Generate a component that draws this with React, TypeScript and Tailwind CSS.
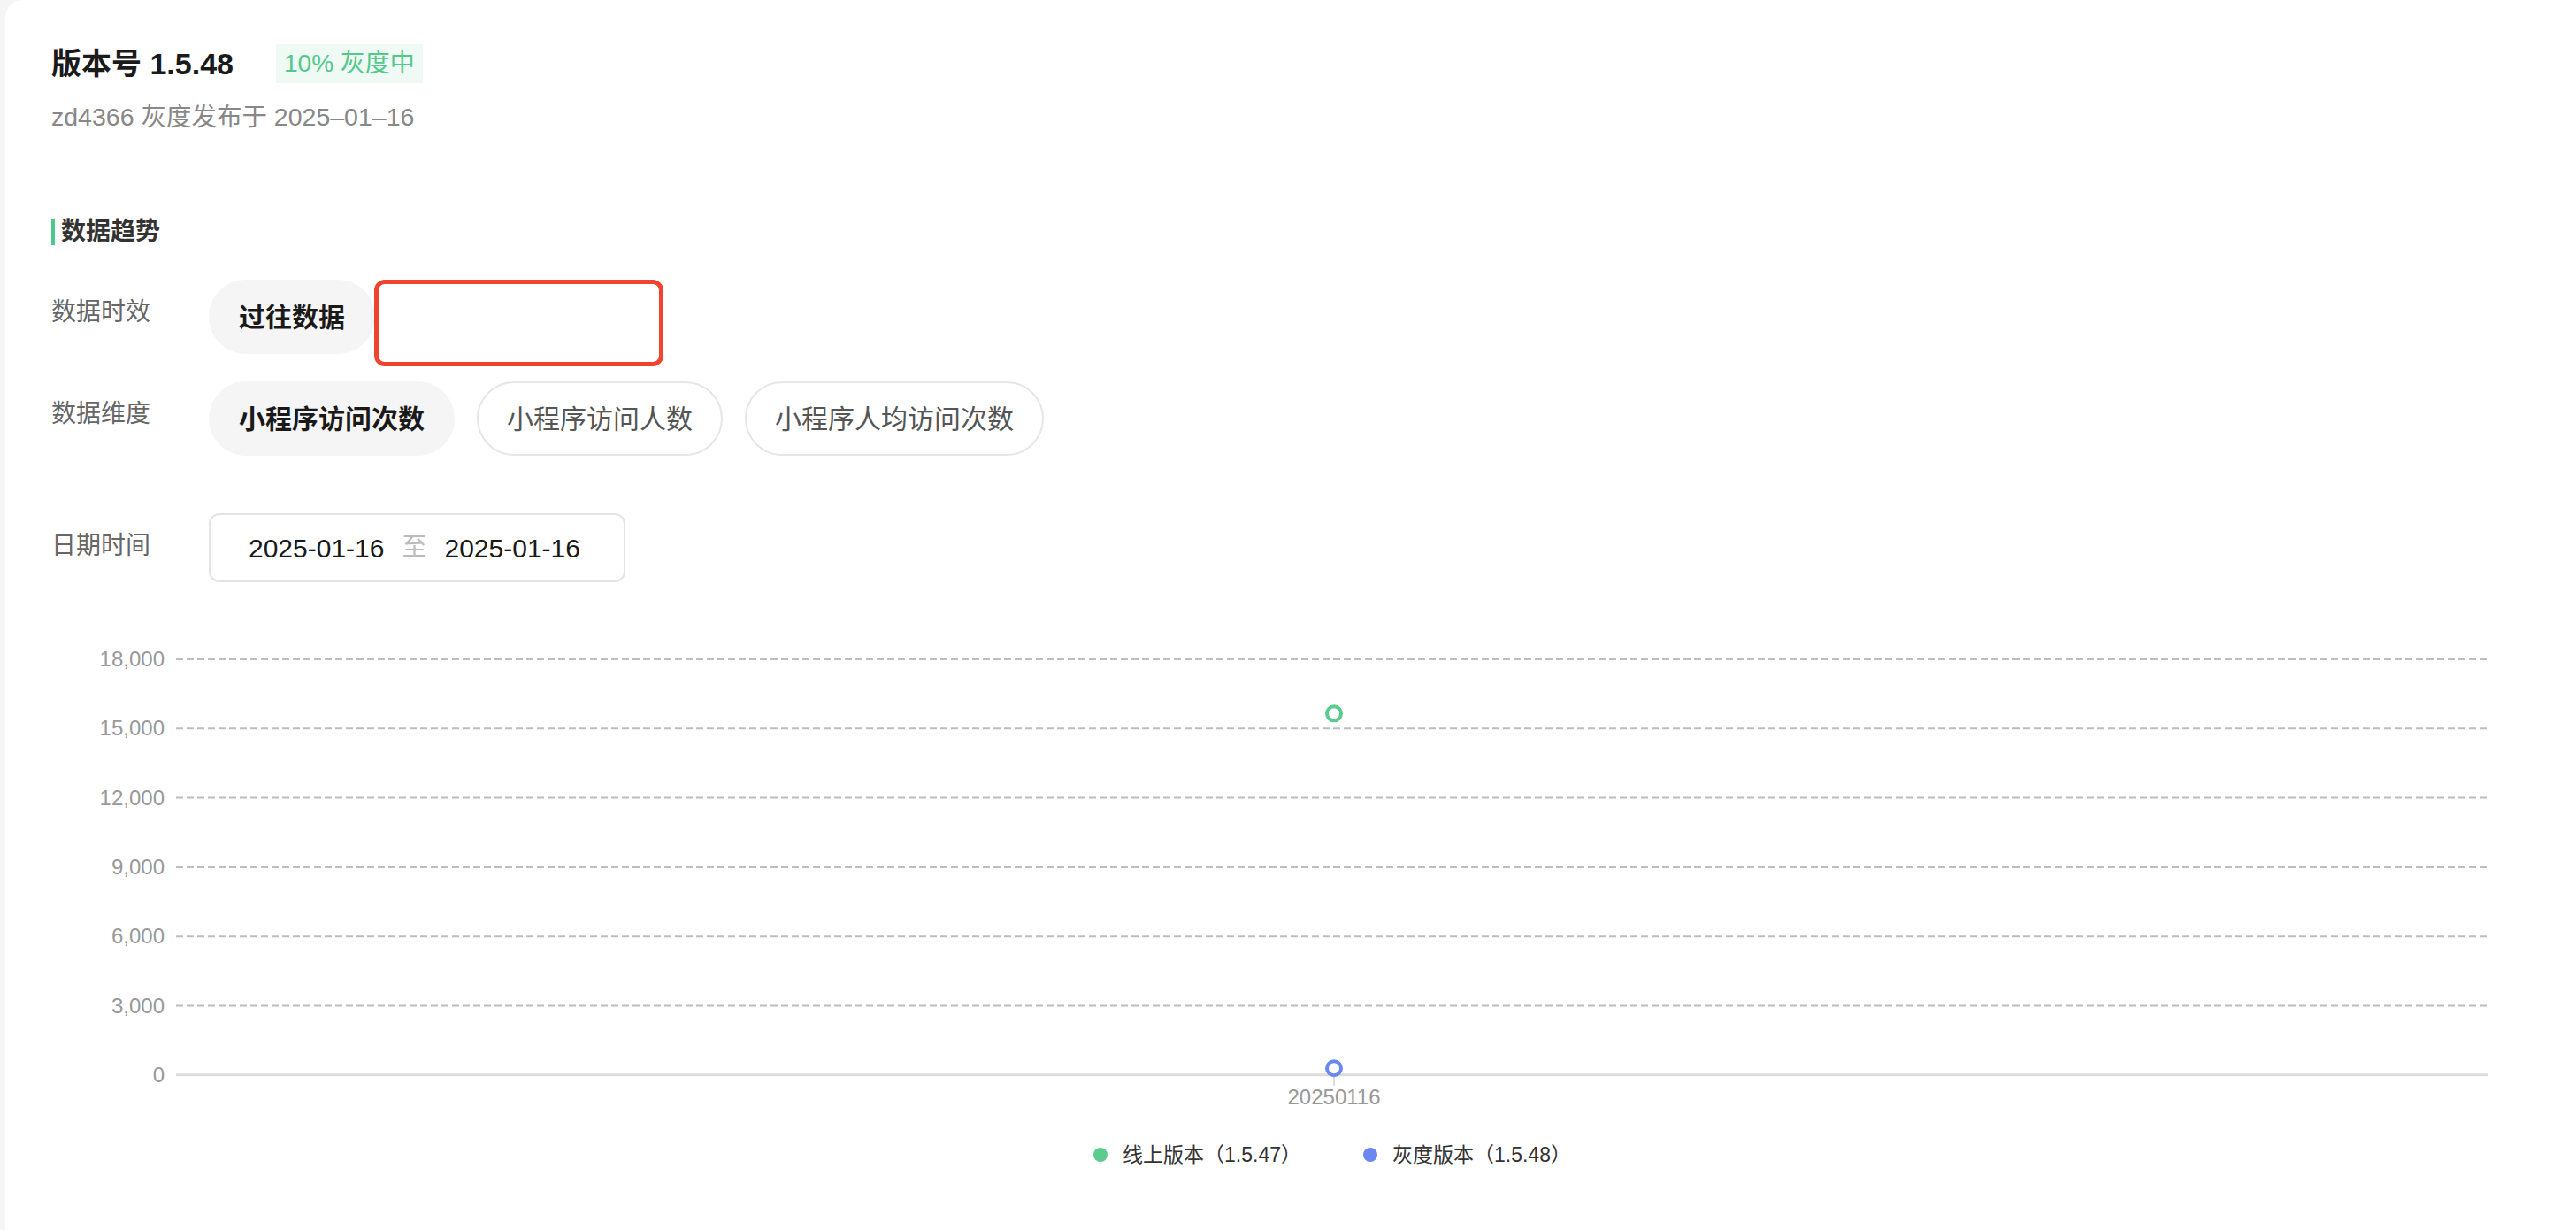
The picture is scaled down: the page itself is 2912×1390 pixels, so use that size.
import React from "react";

const FONT = "font-['Liberation_Sans','Noto_Sans_CJK_SC',sans-serif]";

function Pill({ label, active }: { label: string; active?: boolean }) {
  return (
    <div
      className={
        "h-[84px] px-[32px] rounded-full border-2 flex items-center text-[30px] whitespace-nowrap " +
        (active
          ? "bg-[#f5f5f5] border-[#f5f5f5] text-[#1a1a1a] font-bold"
          : "bg-white border-[#e6e6e6] text-[#555555]")
      }
    >
      {label}
    </div>
  );
}

function Row({ label, children }: { label: string; children: React.ReactNode }) {
  return (
    <div className="flex items-start">
      <div className="w-[178px] shrink-0 mt-[17px] h-[40px] leading-[40px] text-[28px] text-[#666666]">{label}</div>
      <div className="flex items-start">{children}</div>
    </div>
  );
}

function Chart() {
  const top = 25;
  const step = 78.3;
  const labels = ["18,000", "15,000", "12,000", "9,000", "6,000", "3,000", "0"];
  const x0 = 141;
  const x1 = 2755;
  const px = 1450;
  const yFor = (v: number) => top + 6 * step - (v / 18000) * 6 * step;
  return (
    <svg width={2755} height={550} className="block">
      {labels.map((l, i) => {
        const y = top + i * step;
        return (
          <g key={l}>
            <text x={128} y={y + 8} textAnchor="end" fontSize={24} fill="#999999">
              {l}
            </text>
            {i < 6 ? (
              <line x1={x0} x2={x1} y1={y} y2={y} stroke="#bdbdbd" strokeWidth={2} strokeDasharray="8 4" />
            ) : (
              <line x1={x0} x2={x1 + 6} y1={y} y2={y} stroke="#dcdcdc" strokeWidth={3} />
            )}
          </g>
        );
      })}
      <line x1={px} x2={px} y1={top + 6 * step + 1} y2={top + 6 * step + 12} stroke="#dcdcdc" strokeWidth={2} />
      <text x={px} y={528} textAnchor="middle" fontSize={24} fill="#999999">
        20250116
      </text>
      <circle cx={px} cy={yFor(15650)} r={8} fill="#ffffff" stroke="#5ccb8e" strokeWidth={4} />
      <circle cx={px} cy={yFor(290)} r={8} fill="#ffffff" stroke="#6a87f2" strokeWidth={4} />
    </svg>
  );
}

export default function App() {
  return (
    <div className={"min-h-[1390px] bg-[#f5f5f5] pl-[6px] flex " + FONT}>
      <div className="flex-1 bg-white rounded-tl-[20px] pl-[52px] pt-[50px]">
        <div className="flex items-center h-[44px]">
          <div className="text-[34px] font-bold text-[#1a1a1a] leading-none">版本号 1.5.48</div>
          <div className="ml-[48px] h-[44px] px-[9px] flex items-center bg-[#eefaf3] text-[#52c98b] text-[28px]">
            10% 灰度中
          </div>
        </div>
        <div className="mt-[18px] h-[40px] leading-[40px] text-[28.5px] text-[#888888]">zd4366 灰度发布于 2025–01–16</div>

        <div className="mt-[90px] flex items-center h-[40px]">
          <div className="w-[4px] h-[30px] bg-[#4cc98a]" />
          <div className="ml-[7px] text-[28px] font-bold text-[#333333]">数据趋势</div>
        </div>

        <div className="mt-[34px]">
          <Row label="数据时效">
            <Pill label="过往数据" active />
            <div className="w-[327px] h-[98px] border-[5px] border-[#ee4430] rounded-[12px] -ml-[1px]" />
          </Row>
          <div className="mt-[17px]">
            <Row label="数据维度">
              <div className="flex gap-[25px]">
                <Pill label="小程序访问次数" active />
                <Pill label="小程序访问人数" />
                <Pill label="小程序人均访问次数" />
              </div>
            </Row>
          </div>
          <div className="mt-[65px]">
            <Row label="日期时间">
              <div className="h-[78px] border-2 border-[#e4e4e4] rounded-[12px] pl-[43px] pr-[49px] flex items-center gap-[20px] text-[30px] text-[#1a1a1a]">
                <span>2025-01-16</span>
                <span className="text-[#bbbbbb] text-[28px]">至</span>
                <span>2025-01-16</span>
              </div>
            </Row>
          </div>
        </div>

        <div className="mt-[62px]">
          <Chart />
        </div>
        <div className="w-[2755px] pl-[141px] mt-[20px]">
          <div className="flex justify-center items-center gap-[70px] text-[23px] text-[#333333] h-[30px]">
            <div className="flex items-center gap-[17px]">
              <div className="w-[16px] h-[16px] rounded-full bg-[#5ccb8e]" />
              <span>线上版本（1.5.47）</span>
            </div>
            <div className="flex items-center gap-[17px]">
              <div className="w-[16px] h-[16px] rounded-full bg-[#6a87f2]" />
              <span>灰度版本（1.5.48）</span>
            </div>
          </div>
        </div>
      </div>
    </div>
  );
}
